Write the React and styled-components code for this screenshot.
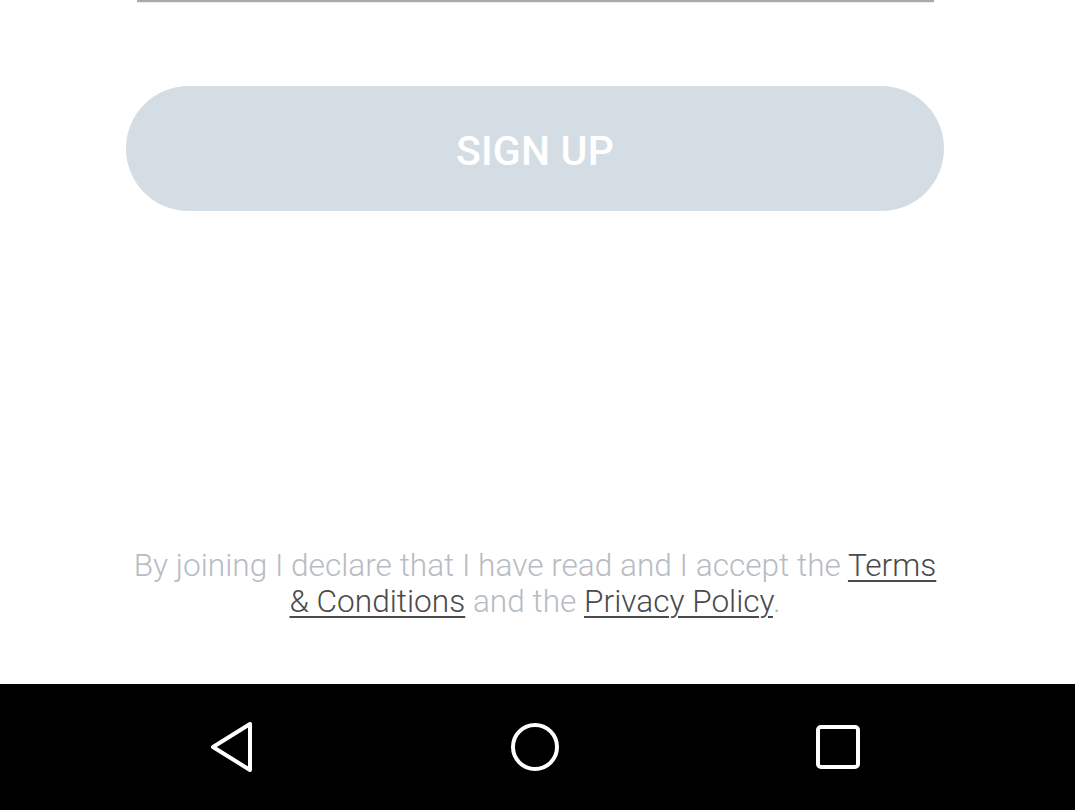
import React from "react";
import styled, { createGlobalStyle } from "styled-components";

const Global = createGlobalStyle`
  html, body { margin: 0; padding: 0; background: #ffffff; }
  body { font-family: Roboto, "Noto Sans", sans-serif; }
`;

const Screen = styled.div`
  width: 1075px;
  height: 810px;
  display: flex;
  flex-direction: column;
  background: #ffffff;
  overflow: hidden;
`;

const Content = styled.main`
  flex: 1;
  display: flex;
  flex-direction: column;
  align-items: center;
  padding-right: 5px;
`;

const Underline = styled.div`
  width: 797px;
  height: 2px;
  background: #a9a9a9;
  box-shadow: 0 1px 1px rgba(0, 0, 0, 0.08);
  margin-left: 1px;
`;

const SignUpButton = styled.button`
  margin-top: 84px;
  width: 818px;
  height: 125px;
  border: none;
  border-radius: 63px;
  background: #d5dde4;
  color: #ffffff;
  font-family: Roboto, sans-serif;
  font-weight: 500;
  font-size: 41px;
  letter-spacing: 0.2px;
  text-transform: uppercase;
  display: flex;
  align-items: center;
  justify-content: center;
  padding: 5px 0 0 0;
  cursor: default;
`;

const Legal = styled.p`
  margin: auto 0 0 0;
  padding-bottom: 64px;
  width: 812px;
  text-align: center;
  font-family: Roboto, sans-serif;
  font-weight: 300;
  font-size: 31.6px;
  line-height: 36px;
  color: #b7bcc2;
`;

const LegalLink = styled.a`
  color: #4a4a4a;
  text-decoration: underline;
  text-decoration-thickness: 2px;
  text-underline-offset: 4px;
`;

const NavBar = styled.nav`
  height: 126px;
  flex-shrink: 0;
  background: #000000;
  display: flex;
  align-items: center;
  justify-content: center;
  padding-right: 6px;
`;

const NavSlot = styled.div`
  width: 303px;
  height: 60px;
  display: flex;
  align-items: center;
  justify-content: center;
`;

const BackIcon = () => (
  <svg width="46" height="50" viewBox="0 0 46 50">
    <path
      d="M41 2 L41 48 L4 25 Z"
      fill="none"
      stroke="#fff"
      strokeWidth="4"
      strokeLinejoin="round"
    />
  </svg>
);

const HomeIcon = () => (
  <svg width="52" height="52" viewBox="0 0 52 52">
    <circle cx="26" cy="26" r="22" fill="none" stroke="#fff" strokeWidth="4" />
  </svg>
);

const RecentsIcon = () => (
  <svg width="48" height="48" viewBox="0 0 48 48">
    <rect x="4" y="4" width="40" height="40" rx="3" fill="none" stroke="#fff" strokeWidth="4" />
  </svg>
);

export default function App() {
  return (
    <>
      <Global />
      <Screen>
        <Content>
          <Underline />
          <SignUpButton>Sign up</SignUpButton>
          <Legal>
            By joining I declare that I have read and I accept the{" "}
            <LegalLink>Terms &amp; Conditions</LegalLink> and the{" "}
            <LegalLink>Privacy Policy</LegalLink>.
          </Legal>
        </Content>
        <NavBar>
          <NavSlot><BackIcon /></NavSlot>
          <NavSlot><HomeIcon /></NavSlot>
          <NavSlot><RecentsIcon /></NavSlot>
        </NavBar>
      </Screen>
    </>
  );
}
